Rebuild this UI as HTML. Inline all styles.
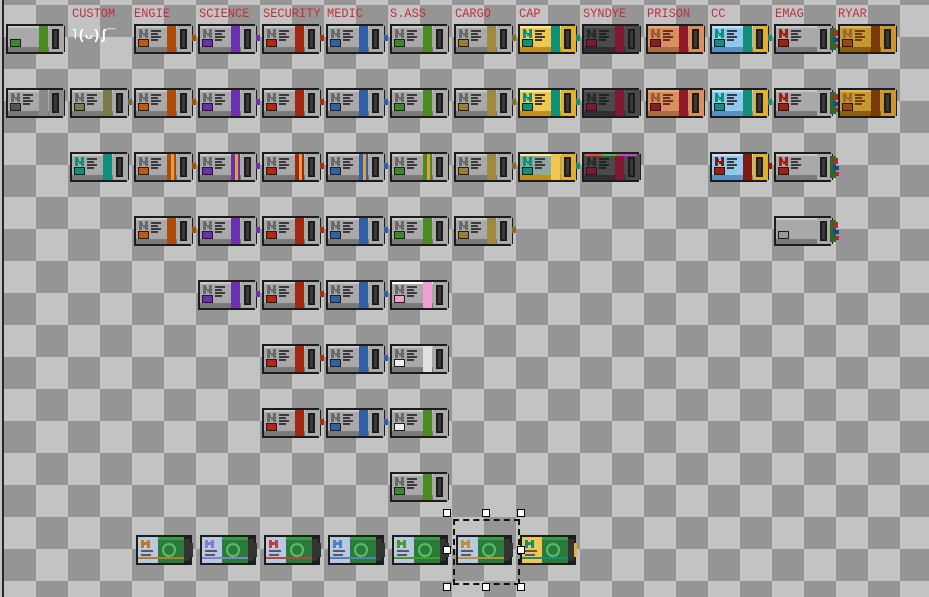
<!DOCTYPE html>
<html><head><meta charset="utf-8"><style>
html,body{margin:0;padding:0}
body{width:929px;height:597px;position:relative;overflow:hidden;
background-color:#c3c3c3;
background-image:linear-gradient(45deg,#959595 25%,transparent 25%,transparent 75%,#959595 75%),linear-gradient(45deg,#959595 25%,transparent 25%,transparent 75%,#959595 75%);
background-size:64px 64px;background-position:4px 5px,36px 37px;}
.a{position:absolute;box-sizing:border-box}
.lbl{position:absolute;top:7px;font:12px "Liberation Mono",monospace;color:#c0303a;letter-spacing:0px;transform:scaleY(1.05)}
.h{position:absolute;width:8px;height:8px;background:#fff;border:1px solid #000;box-sizing:border-box}
</style></head><body>
<div class="a" style="left:0;top:0;width:2px;height:597px;background:#c3c3c3"></div>
<div class="a" style="left:2px;top:0;width:2px;height:597px;background:#2a2030"></div>
<div class="lbl" style="left:72px">CUSTOM</div>
<div class="lbl" style="left:134px">ENGIE</div>
<div class="lbl" style="left:199px">SCIENCE</div>
<div class="lbl" style="left:263px">SECURITY</div>
<div class="lbl" style="left:327px">MEDIC</div>
<div class="lbl" style="left:390px">S.ASS</div>
<div class="lbl" style="left:455px">CARGO</div>
<div class="lbl" style="left:519px">CAP</div>
<div class="lbl" style="left:583px">SYNDYE</div>
<div class="lbl" style="left:647px">PRISON</div>
<div class="lbl" style="left:711px">CC</div>
<div class="lbl" style="left:775px">EMAG</div>
<div class="lbl" style="left:838px">RYAR</div>
<div class="a" style="left:70px;top:28px;font:bold 14px 'Liberation Mono',monospace;color:#fff;letter-spacing:-1px">˥(ᴗ)ʃ‾</div>
<div id="c"></div>
<div class="a" style="left:453px;top:519px;width:67px;height:66px;border:2px dashed #111"></div>
<div class="h" style="left:443px;top:509px"></div><div class="h" style="left:482px;top:509px"></div><div class="h" style="left:517px;top:509px"></div>
<div class="h" style="left:443px;top:546px"></div><div class="h" style="left:517px;top:546px"></div>
<div class="h" style="left:443px;top:583px"></div><div class="h" style="left:482px;top:583px"></div><div class="h" style="left:517px;top:583px"></div>
<script>
var C=document.getElementById('c'),h='';
function r(x,y,w,hh,c){h+='<div class="a" style="left:'+x+'px;top:'+y+'px;width:'+w+'px;height:'+hh+'px;background:'+c+'"></div>';}
function pda(x,y,o){
 var b=o.b||'#a9a9a9',d=o.d||'#7a7a7a';
 r(x,y,57,30,'#1c1c1c');r(x+57,y+2,2,26,'#1c1c1c');
 r(x+2,y+2,56,26,b);r(x+2,y+2,56,2,o.l||'#c8c8c8');r(x+2,y+23,56,5,d);
 if(!o.plain){
  r(x+5,y+5,3,9,o.n||'#6a6a6a');r(x+11,y+5,3,9,o.n||'#6a6a6a');r(x+7,y+7,2,3,o.n||'#6a6a6a');r(x+9,y+9,2,3,o.n||'#6a6a6a');
  for(var i=0;i<4;i++)r(x+17,y+6+i*3,i%2?7:10,2,o.t||'#3a3a3a');
 }
 r(x+4,y+15,11,8,'#1c1c1c');r(x+5,y+16,9,6,o.btn||'#c05a10');
 if(o.s){r(x+33,y+2,9,26,o.s);}
 if(o.s2){r(x+37,y+2,3,26,o.s2);}
 r(x+43,y+2,15,26,o.cap||b);r(x+46,y+5,7,20,'#1c1c1c');r(x+48,y+7,3,16,'#3a3a3a');
 if(o.e)r(x+58,y+11,4,6,o.e);
 if(o.em){r(x+56,y+4,6,22,'#2c6a20');r(x+60,y+6,4,6,'#c02040');r(x+59,y+14,6,4,'#2040a0');r(x+62,y+20,3,4,'#c02040');}
}
var T={
 gr:{s:'#4a8a1e',btn:'#3a8a2a'},en:{s:'#b04a08',btn:'#c05a10',e:'#b04a08'},sc:{s:'#6a30b0',btn:'#6a30b0',e:'#6a30b0'},
 se:{s:'#a02810',btn:'#b02810',e:'#b02810'},me:{s:'#3060a8',btn:'#3060a8',e:'#3060a8'},sa:{s:'#4a8a1e',btn:'#3a8a2a'},
 ca:{s:'#a08a40',btn:'#a07a30',e:'#8a6a20'},cp:{b:'#f0c850',l:'#ffe890',d:'#c09020',s:'#10907a',btn:'#10907a',n:'#10907a',cap:'#e0b030',e:'#10907a'},
 sy:{b:'#4a4a4a',l:'#5a5a5a',d:'#303030',s:'#801830',btn:'#801830',n:'#2a2a2a',t:'#222'},
 pr:{b:'#d89060',l:'#e8a878',d:'#b06a40',s:'#901a28',btn:'#901a28',n:'#a05a30',t:'#6a3020'},
 cc:{b:'#90c8f0',l:'#c0e4ff',d:'#5a90c0',s:'#10907a',btn:'#10907a',n:'#10907a',cap:'#e0b030',e:'#10907a'},
 em:{btn:'#a02010',n:'#a02010',em:1},ry:{b:'#c89830',l:'#e0b850',d:'#8a6010',s:'#7a3a08',btn:'#9a4a10',n:'#9a6a20',t:'#6a4010'}
};
var cols=[null,null,'en','sc','se','me','sa','ca','cp','sy','pr','cc','em','ry'];
function X(c){return 6+64*c}
pda(X(0),24,{plain:1,s:'#4a8a1e',btn:'#3a8a2a'});
for(var c=2;c<14;c++)pda(X(c),24,T[cols[c]]);
pda(X(0),88,{btn:'#555',s:'#8a8a8a',cap:'#8a8a8a'});pda(X(1),88,{s:'#7a7a4a',btn:'#7a7a4a',e:'#6a6a3a'});
for(c=2;c<14;c++)pda(X(c),88,T[cols[c]]);
pda(X(1),152,{s:'#10907a',btn:'#10907a',n:'#10907a'});
var r2={2:{s:'#b04a08',s2:'#e0a040'},3:{s:'#6a30b0',s2:'#e0a040'},4:{s:'#a02810',s2:'#e0a040'},5:{s:'#3060a8',s2:'#e0a040'},6:{s:'#4a8a1e',s2:'#e0a040'},7:{s:'#a08a40'},8:{b:'#90a8a0',s:'#f0c850',btn:'#10907a'},9:T.sy,11:{b:'#90c8f0',l:'#c0e4ff',d:'#5a90c0',s:'#801a10',btn:'#a02010',n:'#801a10',e:'#801a10'},12:T.em};
for(var k in r2){var o=Object.assign({},T[cols[k]]||{},r2[k]);pda(X(+k),152,o);}
r(X(9)+3,152+2,52,2,'#ff4040');r(X(9)+20,154,15,2,'#40c040');r(X(9)+38,154,15,2,'#c040e0');
for(c=2;c<8;c++)pda(X(c),216,T[cols[c]]);
pda(X(12),216,{plain:1,btn:'#999',em:1});
for(c=3;c<7;c++)pda(X(c),280,c==6?{s:'#f0a0d0',btn:'#f0a0d0',l:'#fff'}:T[cols[c]]);
[4,5].forEach(function(c){pda(X(c),344,T[cols[c]]);pda(X(c),408,T[cols[c]]);});
pda(X(6),344,{s:'#e0e0e0',btn:'#eee'});pda(X(6),408,{s:'#4a8a1e',btn:'#eee'});
pda(X(6),472,T.sa);
var accs=['#c07a20','#8080d0','#c04040','#5080c0','#4a9a2a','#c09030','#10907a'];
for(var i=0;i<7;i++){var x=136+64*i,y=535,lb=i==6?'#f0c850':'#b8c8e0';
 r(x,y,56,30,'#1c1c1c');r(x+2,y+2,20,26,lb);r(x+22,y+2,26,26,'#2a7a3a');r(x+22,y+2,26,3,'#3a9a4a');
 r(x+5,y+5,3,8,accs[i]);r(x+11,y+5,3,8,accs[i]);r(x+8,y+7,3,3,accs[i]);r(x+5,y+15,12,2,'#556');r(x+5,y+19,10,2,'#556');
 h+='<div class="a" style="left:'+(x+26)+'px;top:'+(y+8)+'px;width:14px;height:14px;border-radius:50%;border:2px solid #5ac06a"></div>';
 r(x+2,y+22,46,2,accs[i]);r(x+48,y+4,6,22,'#333');r(x+54,y+8,3,14,i==6?'#e0b030':'#333');}
C.innerHTML=h;
</script>
</body></html>
